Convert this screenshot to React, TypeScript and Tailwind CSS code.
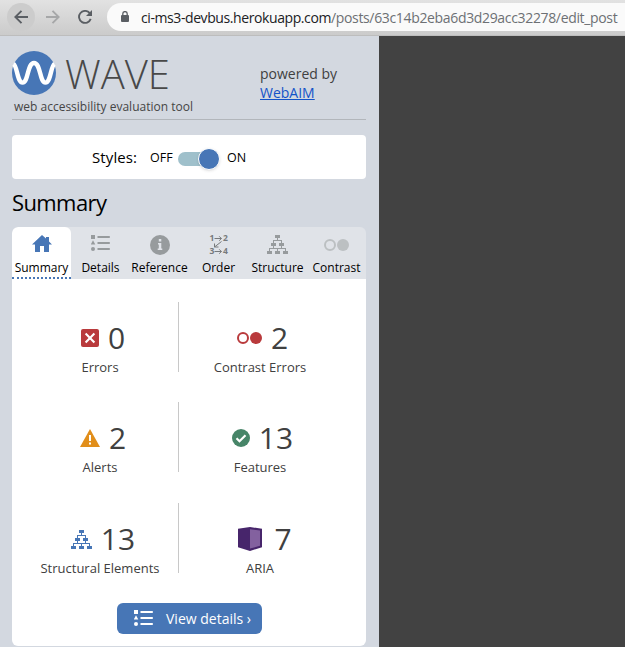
import React from "react";

function ListIcon() {
  return (
    <svg width="19" height="16" viewBox="0 0 19 16" fill="currentColor">
      <path d="M0 0h4v4H0zM2 5.3l2.3 4.2H-.3zM6.5 1h12.3v2H6.5zM6.5 7h12.3v2H6.5zM6.5 13h12.3v2H6.5z" />
      <circle cx="2" cy="14" r="2" />
    </svg>
  );
}

function TreeIcon() {
  return (
    <svg width="21" height="19" viewBox="0 0 21 19" fill="currentColor" shapeRendering="crispEdges">
      <path d="M8 0h5v3H8zM4 8h5v3H4zM12 8h5v3h-5zM0 16h5v3H0zM8 16h5v3H8zM16 16h5v3h-5z" />
      <path d="M10 3h1v2h-1zM6 5h9v1H6zM6 5h1v3H6zM14 5h1v3h-1zM6 11h1v2H6zM14 11h1v2h-1zM2 13h17v1H2zM2 13h1v3H2zM10 13h1v3h-1zM18 13h1v3h-1z" />
    </svg>
  );
}

function ContrastIcon() {
  return (
    <svg width="25" height="12" viewBox="0 0 25 12">
      <circle cx="6" cy="6" r="5" fill="none" stroke="currentColor" strokeWidth="2" />
      <circle cx="19" cy="6" r="6" fill="currentColor" />
    </svg>
  );
}

function HomeIcon() {
  return (
    <svg width="20" height="17" viewBox="0 0 20 17" fill="#4776b6">
      <path d="M10 0l4 3.6V2h3v4.4L20 9.5h-3V17h-5v-6H8v6H3V9.5H0z" />
    </svg>
  );
}

function InfoIcon() {
  return (
    <svg width="20" height="20" viewBox="0 0 20 20">
      <circle cx="10" cy="10" r="10" fill="#979b9d" />
      <path d="M8.8 4h2.5v2.4H8.8zM8 8h3.3v5.5h1V15H7.7v-1.5h1.1v-4H8z" fill="#e0e3e8" />
    </svg>
  );
}

function OrderIcon() {
  return (
    <svg className="overflow-visible" width="20" height="20" viewBox="0 0 20 20" fill="#777a7c">
      <g fontFamily="Open Sans, sans-serif" fontWeight="700" fontSize="8.5">
        <text x="0.5" y="6">1</text>
        <text x="14" y="6">2</text>
        <text x="0.5" y="19">3</text>
        <text x="14" y="19">4</text>
      </g>
      <path d="M5.5 3.5h7M10.2 1.3l2.2 2.2-2.2 2.2M5.5 16.5h7M10.2 14.3l2.2 2.2-2.2 2.2M12.5 6.5L5.5 12M5.5 8.5V12h4" fill="none" stroke="#777a7c" strokeWidth="1" />
    </svg>
  );
}

function ErrorIcon() {
  return (
    <svg width="18" height="18" viewBox="0 0 18 18">
      <rect width="18" height="18" rx="2" fill="#b93a3c" />
      <path d="M4.6 4.6l8.8 8.8M13.4 4.6l-8.8 8.8" stroke="#fff" strokeWidth="2.1" />
    </svg>
  );
}

function AlertIcon() {
  return (
    <svg width="20" height="18" viewBox="0 0 20 18">
      <path d="M10 0l10 18H0z" fill="#e18e1a" />
      <path d="M9 6h2v6H9zM9 13.5h2v2H9z" fill="#fff" />
    </svg>
  );
}

function FeatureIcon() {
  return (
    <svg width="18" height="18" viewBox="0 0 18 18">
      <circle cx="9" cy="9" r="9" fill="#478568" />
      <path d="M4.5 9.2l3 3 6-6" fill="none" stroke="#fff" strokeWidth="2.2" />
    </svg>
  );
}

function AriaIcon() {
  return (
    <svg width="24" height="24" viewBox="0 0 24 24">
      <path d="M0 1.8L12 0l12 1.8v18.4L12 24 0 20.2z" fill="#47256b" />
      <path d="M12 2.2l10 1.2v15.4L12 21.5z" fill="#83619f" />
    </svg>
  );
}

const tabs = [
  { label: "Summary", icon: <HomeIcon />, style: "pt-2 text-[#4776b6]" },
  { label: "Details", icon: <ListIcon />, style: "pt-2 text-[#979b9d]" },
  { label: "Reference", icon: <InfoIcon />, style: "pt-2 text-[#979b9d]" },
  { label: "Order", icon: <OrderIcon />, style: "pt-2 text-[#777a7c]" },
  { label: "Structure", icon: <TreeIcon />, style: "pt-2 text-[#979b9d]" },
  { label: "Contrast", icon: <ContrastIcon />, style: "pt-3 text-[#bcc0c2]" },
];

const stats = [
  { label: "Errors", value: 0, icon: <ErrorIcon />, color: "", gap: "gap-[9px] pl-[6px]" },
  { label: "Contrast Errors", value: 2, icon: <ContrastIcon />, color: "text-[#b93a3c]", gap: "gap-[9px] pl-[5px]" },
  { label: "Alerts", value: 2, icon: <AlertIcon />, color: "", gap: "gap-[9px] pl-[6px]" },
  { label: "Features", value: 13, icon: <FeatureIcon />, color: "", gap: "gap-[9px] pl-[5px]" },
  { label: "Structural Elements", value: 13, icon: <TreeIcon />, color: "text-[#4776b6]", gap: "gap-[9px] pl-[6px]" },
  { label: "ARIA", value: 7, icon: <AriaIcon />, color: "", gap: "gap-3 pl-[10px]" },
];

function BrowserBar() {
  return (
    <header className="flex h-9 items-start border-b border-[#bdbdbd] bg-linear-to-b from-[#e2e2e2] to-[#cbcbcb] pl-[7px] pt-[3px]">
      <div className="flex h-7 w-7 items-center justify-center rounded-full bg-[#cccccc]">
        <svg width="14" height="14" viewBox="0 0 14 14" fill="none" stroke="#5a5e63" strokeWidth="1.9">
          <path d="M14 7H1.5M7.5 .8L1.3 7l6.2 6.2" />
        </svg>
      </div>
      <svg className="ml-[11px] mt-[7px]" width="14" height="14" viewBox="0 0 14 14" fill="none" stroke="#a6a7a8" strokeWidth="1.9">
        <path d="M0 7h12.5M6.5 .8L12.7 7l-6.2 6.2" />
      </svg>
      <svg className="ml-[18px] mt-[7px]" width="14" height="14" viewBox="0 0 14 14">
        <path d="M11.7 3.1A6 6 0 1 0 12.7 8.9" fill="none" stroke="#5a5e63" strokeWidth="1.9" />
        <path d="M14 0v6H8z" fill="#5a5e63" />
      </svg>
      <div className="ml-[15px] flex h-7 min-w-0 flex-1 items-center rounded-l-full bg-[#fafafa] pl-[14px]">
        <svg className="mb-0.5 shrink-0" width="8" height="11" viewBox="0 0 8 11">
          <path d="M1.8 5V2.8a2.2 2.2 0 0 1 4.4 0V5" fill="none" stroke="#5a5e63" strokeWidth="1.3" />
          <rect y="4" width="8" height="7" rx="1" fill="#5a5e63" />
        </svg>
        <span className="ml-3 whitespace-nowrap text-[14px] tracking-[-0.41px] text-[#202124]">
          ci-ms3-devbus.herokuapp.com
          <span className="tracking-[-0.34px] text-[#6d7074]">/posts/63c14b2eba6d3d29acc32278/edit_post</span>
        </span>
      </div>
    </header>
  );
}

function Logo() {
  return (
    <div className="flex h-[84px] border-b border-[#b2b6bb]">
      <div className="w-[248px] pt-[15px]">
        <div className="flex h-11">
          <svg width="44" height="44" viewBox="0 0 44 44">
            <circle cx="22" cy="22" r="22" fill="#4776b6" />
            <path d="M1.6 12.8C5.2 15 5.2 31.6 10.6 31.6C16.4 31.6 15.2 12 22 12S27.6 31.6 33.4 31.6C38.8 31.6 38.8 15 42.4 12.8" fill="none" stroke="#fff" strokeWidth="4.4" />
          </svg>
          <span className="ml-[9px] mt-px text-[40px] font-light leading-[44px] text-[#484848]">WAVE</span>
        </div>
        <p className="ml-[2px] mt-[2px] text-[12px] leading-[20px] text-[#454545]">web accessibility evaluation tool</p>
      </div>
      <div className="pt-[28px] text-[14px] leading-[19px] text-[#404040]">
        <div>powered by</div>
        <a className="text-[#1353c8] underline">WebAIM</a>
      </div>
    </div>
  );
}

export default function App() {
  return (
    <div className="flex h-[647px] w-[625px] flex-col overflow-hidden bg-[#424242] font-['Open_Sans','Noto_Sans',sans-serif]">
      <BrowserBar />
      <main className="h-[611px] w-[379px] bg-[#d3d8e0] pl-3 pr-[13px]">
        <Logo />
        <section className="mt-[15px] flex h-11 items-center rounded bg-white pl-20 text-black">
          <span className="w-[58px] text-[15px] tracking-[0.1px]">Styles:</span>
          <span className="mt-0.5 w-7 text-[12.5px]">OFF</span>
          <div className="mt-1 flex h-[14px] w-[40px] items-center justify-end rounded-full bg-[#9fc0cb]">
            <div className="-mr-[2px] h-[22px] w-[22px] shrink-0 rounded-full border border-white bg-[#4776b6] shadow-sm" />
          </div>
          <span className="ml-[9px] mt-0.5 text-[12.5px]">ON</span>
        </section>
        <h1 className="flex h-12 items-center pb-0.5 text-[22px] tracking-[-0.6px] text-black">Summary</h1>
        <nav className="flex h-[52px] overflow-hidden rounded-t-md bg-[#e0e3e8]">
          {tabs.map((t, i) => (
            <div
              key={t.label}
              className={`flex w-[59px] flex-col items-center ${i === 0 ? "rounded-t-md border-b-2 border-dotted border-[#4776b6] bg-white" : ""}`}
            >
              <div className={`flex h-[32px] items-start ${t.style}`}>{t.icon}</div>
              <span className="whitespace-nowrap text-[12px] leading-[17px] text-black">{t.label}</span>
            </div>
          ))}
        </nav>
        <section className="h-[367px] rounded-b-md bg-white pt-[23px]">
          <div className="grid grid-cols-[157px_162px] grid-rows-[100px_101px_70px] pl-[10px]">
            {stats.map((s, i) => (
              <div key={s.label} className={`flex h-[70px] flex-col items-center pt-5 ${i % 2 === 0 ? "border-r border-[#c8c8c8]" : ""}`}>
                <div className={`flex h-8 items-center ${s.gap}`}>
                  <span className={s.color}>{s.icon}</span>
                  <span className="text-[30px] leading-8 text-[#404040]">{s.value}</span>
                </div>
                <span className="mt-[3px] whitespace-nowrap text-[13px] leading-5 text-[#404040]">{s.label}</span>
              </div>
            ))}
          </div>
          <button className="ml-[105px] mt-[30px] flex h-[31px] w-[145px] items-center rounded-md bg-[#4776b6] pb-px pl-[17px] text-[14px] text-white">
            <ListIcon />
            <span className="ml-[13px] whitespace-nowrap">View details ›</span>
          </button>
        </section>
      </main>
    </div>
  );
}
